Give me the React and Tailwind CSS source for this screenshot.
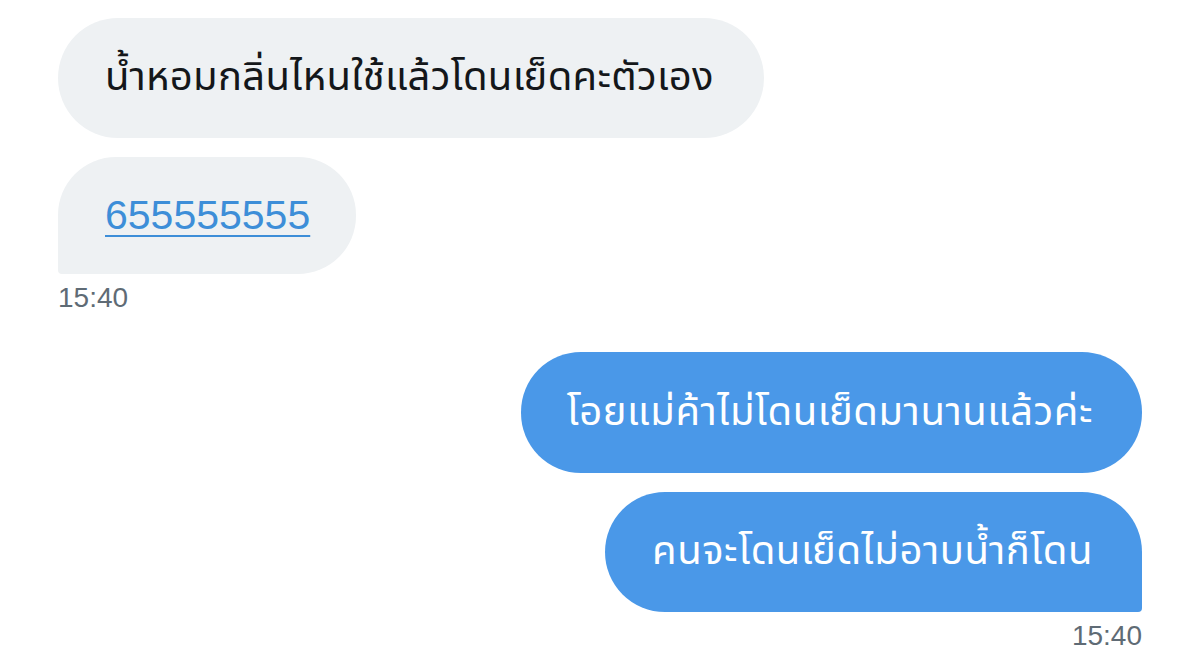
export default function App() {
  const thai = { fontFamily: '"Noto Sans Thai", "Noto Sans", "DejaVu Sans", sans-serif' };
  const latin = { fontFamily: '"Liberation Sans", Arial, sans-serif' };
  return (
    <div className="w-[1200px] h-[671px] bg-white overflow-hidden px-[58px] pt-[18px] flex flex-col" style={thai}>
      <div className="flex flex-col items-start">
        <div className="h-[120px] bg-[#eef1f3] rounded-[60px] pl-[47px] pr-[50px] flex items-center text-[40px] leading-none tracking-[0.3px] text-[#14171a] whitespace-nowrap">
          น้ำหอมกลิ่นไหนใช้แล้วโดนเย็ดคะตัวเอง
        </div>
        <div className="mt-[19px] h-[117px] bg-[#eef1f3] rounded-t-[58px] rounded-br-[58px] rounded-bl-[4px] pl-[47px] pr-[46px] flex items-center">
          <span className="text-[41px] leading-none text-[#3d8ed8] underline decoration-2 underline-offset-[6px]" style={latin}>655555555</span>
        </div>
        <div className="mt-[9px] text-[28px] leading-[30px] text-[#5f6b75]" style={latin}>15:40</div>
      </div>
      <div className="flex flex-col items-end mt-[39px]">
        <div className="h-[121px] bg-[#4a98e8] rounded-[60px] pl-[46px] pr-[49px] flex items-center text-[40px] leading-none tracking-[0.55px] text-white whitespace-nowrap">
          โอยแม่ค้าไม่โดนเย็ดมานานแล้วค่ะ
        </div>
        <div className="mt-[19px] h-[120px] bg-[#4a98e8] rounded-t-[60px] rounded-bl-[60px] rounded-br-[4px] pl-[47px] pr-[49px] flex items-center text-[40px] leading-none tracking-[0.55px] text-white whitespace-nowrap">
          คนจะโดนเย็ดไม่อาบน้ำก็โดน
        </div>
        <div className="mt-[9px] text-[28px] leading-[30px] text-[#5f6b75]" style={latin}>15:40</div>
      </div>
    </div>
  );
}
